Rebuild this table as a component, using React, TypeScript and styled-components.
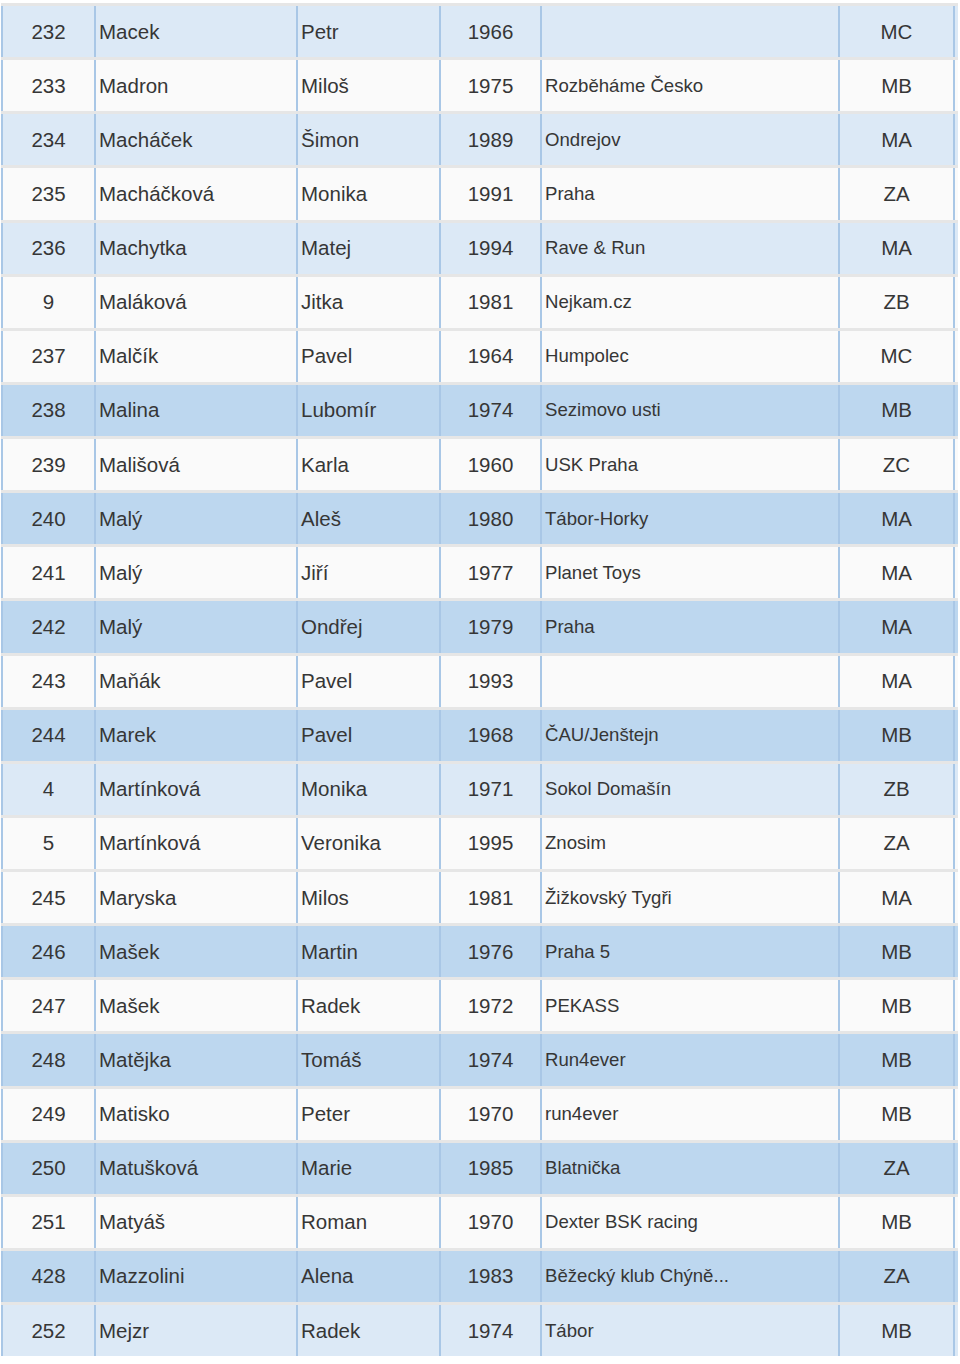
import styled, { createGlobalStyle } from 'styled-components'

type Tone = 'light' | 'mid' | 'plain'

const rows: [string, string, string, string, string, string, Tone][] = [
  ['232', 'Macek', 'Petr', '1966', '', 'MC', 'light'],
  ['233', 'Madron', 'Miloš', '1975', 'Rozběháme Česko', 'MB', 'plain'],
  ['234', 'Macháček', 'Šimon', '1989', 'Ondrejov', 'MA', 'light'],
  ['235', 'Macháčková', 'Monika', '1991', 'Praha', 'ZA', 'plain'],
  ['236', 'Machytka', 'Matej', '1994', 'Rave & Run', 'MA', 'light'],
  ['9', 'Maláková', 'Jitka', '1981', 'Nejkam.cz', 'ZB', 'plain'],
  ['237', 'Malčík', 'Pavel', '1964', 'Humpolec', 'MC', 'plain'],
  ['238', 'Malina', 'Lubomír', '1974', 'Sezimovo usti', 'MB', 'mid'],
  ['239', 'Mališová', 'Karla', '1960', 'USK Praha', 'ZC', 'plain'],
  ['240', 'Malý', 'Aleš', '1980', 'Tábor-Horky', 'MA', 'mid'],
  ['241', 'Malý', 'Jiří', '1977', 'Planet Toys', 'MA', 'plain'],
  ['242', 'Malý', 'Ondřej', '1979', 'Praha', 'MA', 'mid'],
  ['243', 'Maňák', 'Pavel', '1993', '', 'MA', 'plain'],
  ['244', 'Marek', 'Pavel', '1968', 'ČAU/Jenštejn', 'MB', 'mid'],
  ['4', 'Martínková', 'Monika', '1971', 'Sokol Domašín', 'ZB', 'light'],
  ['5', 'Martínková', 'Veronika', '1995', 'Znosim', 'ZA', 'plain'],
  ['245', 'Maryska', 'Milos', '1981', 'Žižkovský Tygři', 'MA', 'plain'],
  ['246', 'Mašek', 'Martin', '1976', 'Praha 5', 'MB', 'mid'],
  ['247', 'Mašek', 'Radek', '1972', 'PEKASS', 'MB', 'plain'],
  ['248', 'Matějka', 'Tomáš', '1974', 'Run4ever', 'MB', 'mid'],
  ['249', 'Matisko', 'Peter', '1970', 'run4ever', 'MB', 'plain'],
  ['250', 'Matušková', 'Marie', '1985', 'Blatnička', 'ZA', 'mid'],
  ['251', 'Matyáš', 'Roman', '1970', 'Dexter BSK racing', 'MB', 'plain'],
  ['428', 'Mazzolini', 'Alena', '1983', 'Běžecký klub Chýně...', 'ZA', 'mid'],
  ['252', 'Mejzr', 'Radek', '1974', 'Tábor', 'MB', 'light']
]

const tones: Record<Tone, string> = {
  light: '#dce9f6',
  mid: '#bdd7ef',
  plain: '#fafafa'
}

const App = () => {
  return (
    <>
      <GlobalStyle />
      <StyledTable>
        {rows.map(([no, surname, name, year, club, cat, tone], i) => (
          <StyledRow key={i} $tone={tone}>
            <StyledCell $align="center">{no}</StyledCell>
            <StyledCell>{surname}</StyledCell>
            <StyledCell>{name}</StyledCell>
            <StyledCell $align="center">{year}</StyledCell>
            <StyledCell $small>{club}</StyledCell>
            <StyledCell $align="center" $last>
              {cat}
            </StyledCell>
          </StyledRow>
        ))}
      </StyledTable>
    </>
  )
}

export default App

const GlobalStyle = createGlobalStyle`
  body {
    margin: 0;
    background: #ffffff;
    font-family: 'Liberation Sans', Arial, sans-serif;
  }
`

const StyledTable = styled.div`
  display: flex;
  flex-direction: column;
  width: 957px;
  padding: 3px 0 0 1px;
`

const StyledRow = styled.div<{ $tone: Tone }>`
  display: grid;
  grid-template-columns: 93px 202px 143px 101px 298px 117px;
  height: 54.125px;
  border-top: 3px solid #e6e6e6;
  box-sizing: border-box;
  background: ${({ $tone }) => tones[$tone]};
`

const StyledCell = styled.div<{ $align?: 'center'; $last?: boolean; $small?: boolean }>`
  display: flex;
  align-items: center;
  justify-content: ${({ $align }) => ($align === 'center' ? 'center' : 'flex-start')};
  padding-left: ${({ $align }) => ($align === 'center' ? '0' : '3px')};
  border-left: 2px solid #a9c7e6;
  border-right: ${({ $last }) => ($last ? '2px solid #a9c7e6' : 'none')};
  box-sizing: border-box;
  font-size: ${({ $small }) => ($small ? '18.6px' : '20.5px')};
  color: #363636;
  white-space: nowrap;
  overflow: hidden;
`
